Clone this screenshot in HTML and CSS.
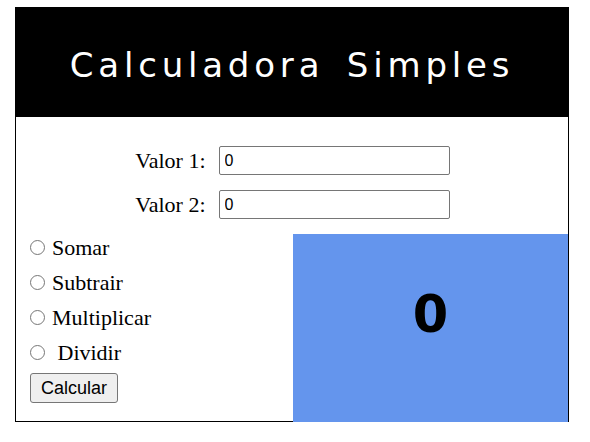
FILE: index.html
```html
<!DOCTYPE html>
<html lang="pt">
<head>
<meta charset="utf-8">
<title>Calculadora Simples</title>
<link rel="stylesheet" href="styles.css">
</head>
<body>
<div class="calc">
  <header class="top">
    <h1 class="title">Calculadora Simples</h1>
  </header>
  <div class="fields">
    <div class="field">
      <label class="lbl" for="v1">Valor 1:</label>
      <input class="inp" id="v1" type="text" value="0">
    </div>
    <div class="field">
      <label class="lbl" for="v2">Valor 2:</label>
      <input class="inp" id="v2" type="text" value="0">
    </div>
  </div>
  <div class="lower">
    <div class="ops">
      <label class="op"><input class="radio" type="radio" name="op">Somar</label>
      <label class="op"><input class="radio" type="radio" name="op">Subtrair</label>
      <label class="op"><input class="radio" type="radio" name="op">Multiplicar</label>
      <label class="op"><input class="radio" type="radio" name="op">&nbsp;Dividir</label>
      <button class="btn" type="button">Calcular</button>
    </div>
    <div class="result">0</div>
  </div>
</div>
</body>
</html>
```
FILE: styles.css
```css
html, body {
  margin: 0;
  padding: 0;
  background: #ffffff;
}
body {
  padding: 7px 0 0 15px;
  font-family: "Liberation Serif", "Times New Roman", serif;
}
.calc {
  width: 552px;
  border: 1px solid #000;
  border-top: none;
}
.top {
  background: #000;
  height: 110px;
  margin: 0 -1px;
  display: flex;
  align-items: center;
  justify-content: center;
}
.title {
  margin: 0;
  color: #fff;
  font-family: "DejaVu Sans", Verdana, sans-serif;
  font-weight: normal;
  font-size: 34px;
  letter-spacing: 4.8px;
  word-spacing: 7px;
  padding-top: 6px;
}
.fields {
  display: flex;
  flex-direction: column;
  align-items: center;
  gap: 15px;
  padding-top: 29px;
}
.field {
  display: flex;
  align-items: center;
}
.lbl {
  font-size: 22px;
  width: 71px;
  white-space: nowrap;
  text-align: right;
  padding-right: 13px;
}
.inp {
  box-sizing: border-box;
  width: 231px;
  height: 29px;
  margin: 0;
  border: 1px solid #767676;
  border-radius: 2px;
  padding: 1px 5px;
  font-family: "Liberation Sans", Arial, sans-serif;
  font-size: 16px;
  color: #000;
}
.lower {
  display: flex;
  justify-content: space-between;
  margin-top: 15px;
}
.ops {
  display: flex;
  flex-direction: column;
  align-items: flex-start;
  padding-left: 9px;
}
.op {
  display: block;
  line-height: 28px;
  margin-bottom: 7px;
  font-size: 22px;
  color: #000;
  white-space: nowrap;
}
.radio {
  appearance: none;
  -webkit-appearance: none;
  box-sizing: border-box;
  width: 15px;
  height: 15px;
  margin: 0 7px 0 5px;
  border: 1px solid #767676;
  border-radius: 50%;
  background: #fff;
  vertical-align: 0;
}
.btn {
  margin: -1px 0 0 5px;
  box-sizing: border-box;
  height: 30px;
  width: 88px;
  padding: 0;
  font-family: "Liberation Sans", Arial, sans-serif;
  font-size: 18px;
  background: #efefef;
  border: 1px solid #767676;
  border-radius: 3px;
  color: #000;
}
.result {
  position: relative;
  width: 275px;
  height: 188px;
  margin-bottom: -1px;
  background: #6495ed;
  box-sizing: border-box;
  padding-top: 55px;
  text-align: center;
  font-family: "DejaVu Sans", Verdana, sans-serif;
  font-weight: bold;
  font-size: 51px;
  line-height: 52px;
  color: #000;
}
```
